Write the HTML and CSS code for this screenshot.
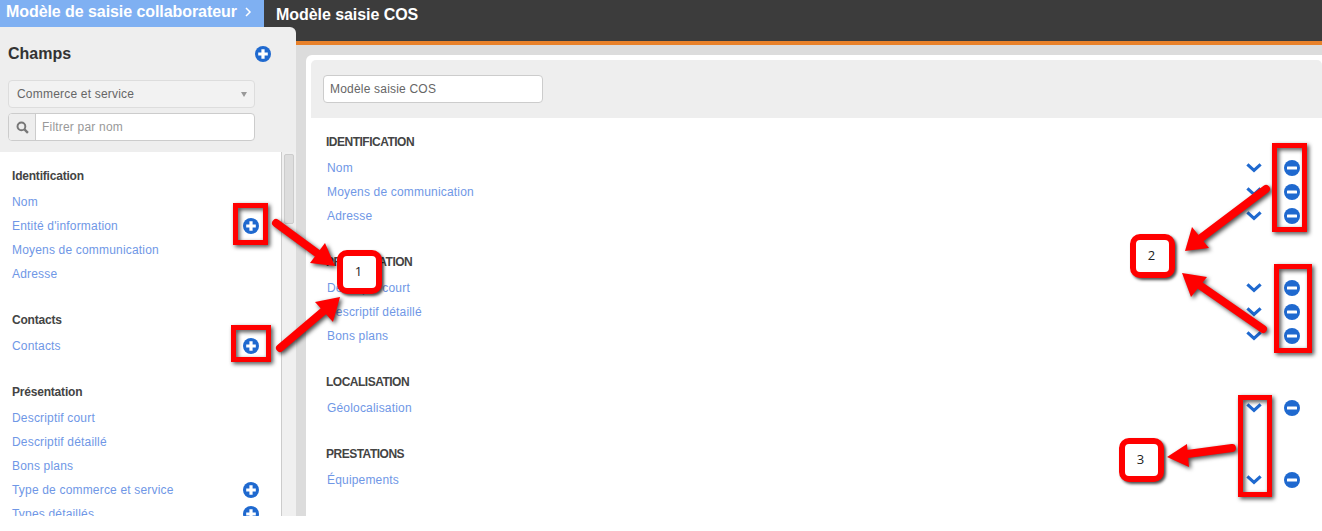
FILE: index.html
```html
<!DOCTYPE html>
<html lang="fr">
<head>
    <meta charset="UTF-8">
    <title>Modèle saisie COS</title>
    <link rel="stylesheet" href="styles.css">
</head>
<body>
    <svg class="icon-defs" width="0" height="0">
        <symbol id="i-plus" viewBox="0 0 16 16">
            <circle cx="8" cy="8" r="8" fill="#1f69cf"/>
            <path d="M6.4 3.2h3.2v3.2h3.2v3.2H9.6v3.2H6.4V9.6H3.2V6.4h3.2z" fill="#fff"/>
        </symbol>
        <symbol id="i-minus" viewBox="0 0 16 16">
            <circle cx="8" cy="8" r="8" fill="#1f69cf"/>
            <rect x="3" y="6.4" width="10" height="3.2" rx="0.6" fill="#fff"/>
        </symbol>
        <symbol id="i-down" viewBox="0 0 16 10">
            <path d="M1.400 1.400 8 7.400l6.600-6" fill="none" stroke="#1f69cf" stroke-width="3.200"/>
        </symbol>
    </svg>

    <div class="page">
        <header class="topbar">
            <div class="crumb">
                <span>Modèle de saisie collaborateur</span>
                <svg class="crumb-arrow" width="7" height="10" viewBox="0 0 7 10"><path d="M1 1l4 4-4 4" fill="none" stroke="#fff" stroke-width="1.500"/></svg>
            </div>
            <div class="topbar-title">Modèle saisie COS</div>
        </header>

        <div class="layout">
            <aside class="sidebar">
                <div class="sidebar-head">
                    <div class="sidebar-title">
                        <h2>Champs</h2>
                        <svg class="icon icon-add"><use href="#i-plus"/></svg>
                    </div>
                    <div class="select-box">Commerce et service <span class="select-caret"></span></div>
                    <div class="filter-box">
                        <span class="filter-addon">
                            <svg width="13" height="13" viewBox="0 0 12 12"><circle cx="5" cy="5" r="3.600" fill="none" stroke="#777" stroke-width="1.800"/><path d="M7.800 7.800 11 11" stroke="#777" stroke-width="2.200"/></svg>
                        </span>
                        <span class="filter-input">Filtrer par nom</span>
                    </div>
                </div>
                <div class="sidebar-body">
                    <div class="field-list">
                        <div class="group">
                            <h3>Identification</h3>
                            <div class="row"><a>Nom</a></div>
                            <div class="row"><a>Entité d'information</a><svg class="icon"><use href="#i-plus"/></svg></div>
                            <div class="row"><a>Moyens de communication</a></div>
                            <div class="row"><a>Adresse</a></div>
                        </div>
                        <div class="group">
                            <h3>Contacts</h3>
                            <div class="row"><a>Contacts</a><svg class="icon"><use href="#i-plus"/></svg></div>
                        </div>
                        <div class="group">
                            <h3>Présentation</h3>
                            <div class="row"><a>Descriptif court</a></div>
                            <div class="row"><a>Descriptif détaillé</a></div>
                            <div class="row"><a>Bons plans</a></div>
                            <div class="row"><a>Type de commerce et service</a><svg class="icon"><use href="#i-plus"/></svg></div>
                            <div class="row"><a>Types détaillés</a><svg class="icon"><use href="#i-plus"/></svg></div>
                        </div>
                    </div>
                    <div class="scrollbar"><div class="scroll-thumb"></div></div>
                </div>
            </aside>

            <main class="main">
                <div class="panel">
                    <div class="panel-head">
                        <div class="name-input">Modèle saisie COS</div>
                    </div>
                    <div class="sections">
                        <section class="group">
                            <h3 class="upper">IDENTIFICATION</h3>
                            <div class="row"><a>Nom</a><svg class="chev"><use href="#i-down"/></svg><svg class="icon"><use href="#i-minus"/></svg></div>
                            <div class="row"><a>Moyens de communication</a><svg class="chev"><use href="#i-down"/></svg><svg class="icon"><use href="#i-minus"/></svg></div>
                            <div class="row"><a>Adresse</a><svg class="chev"><use href="#i-down"/></svg><svg class="icon"><use href="#i-minus"/></svg></div>
                        </section>
                        <section class="group">
                            <h3 class="upper">PRÉSENTATION</h3>
                            <div class="row"><a>Descriptif court</a><svg class="chev"><use href="#i-down"/></svg><svg class="icon"><use href="#i-minus"/></svg></div>
                            <div class="row"><a>Descriptif détaillé</a><svg class="chev"><use href="#i-down"/></svg><svg class="icon"><use href="#i-minus"/></svg></div>
                            <div class="row"><a>Bons plans</a><svg class="chev"><use href="#i-down"/></svg><svg class="icon"><use href="#i-minus"/></svg></div>
                        </section>
                        <section class="group">
                            <h3 class="upper">LOCALISATION</h3>
                            <div class="row"><a>Géolocalisation</a><svg class="chev"><use href="#i-down"/></svg><svg class="icon"><use href="#i-minus"/></svg></div>
                        </section>
                        <section class="group">
                            <h3 class="upper">PRESTATIONS</h3>
                            <div class="row"><a>Équipements</a><svg class="chev"><use href="#i-down"/></svg><svg class="icon"><use href="#i-minus"/></svg></div>
                        </section>
                    </div>
                </div>
            </main>
        </div>

        <!-- Annotations rouges par-dessus la capture -->
        <svg class="marks" width="1322" height="531" viewBox="0 0 1322 531">
            <g fill="none" stroke="#f00" stroke-width="5">
                <rect x="235.500" y="205.500" width="30" height="37"/>
                <rect x="233.500" y="327.500" width="35" height="32"/>
                <rect x="1274.500" y="145.500" width="30" height="84"/>
                <rect x="1276.500" y="266.500" width="33" height="84"/>
                <rect x="1240.500" y="397.500" width="29" height="97"/>
            </g>
            <g fill="none" stroke="#f00" stroke-width="8" stroke-linecap="round">
                <path d="M276 223 321 256"/>
                <path d="M280 348 326 309"/>
                <path d="M1266 189 1197 241"/>
                <path d="M1263 329 1195 282"/>
                <path d="M1232 448 1180 455"/>
            </g>
            <g fill="#f00">
                <path d="M335 266 310 263 325 243z"/>
                <path d="M340 297 333 322 315 302z"/>
                <path d="M1185 251 1192 227 1209 248z"/>
                <path d="M1182 273 1207 277 1191 297z"/>
                <path d="M1167 457 1187 444 1189 467z"/>
            </g>
        </svg>
        <div class="note note-1">1</div>
        <div class="note note-2">2</div>
        <div class="note note-3">3</div>
    </div>
</body>
</html>
```

FILE: styles.css
```css
body {
    margin: 0;
    background-color: #fff;
    font-family: "Liberation Sans", Arial, sans-serif;
    font-size: 12px;
    color: #333;
}

.icon-defs {
    position: absolute;
}

.page {
    position: relative;
    width: 1322px;
    height: 531px;
    overflow: hidden;
}

/* Barre du haut */
.topbar {
    display: flex;
    height: 41px;
    background-color: #3c3c3c;
    border-bottom: 4px solid #e8812a;
    color: #fff;
    font-size: 16px;
    font-weight: bold;
}

.crumb {
    display: flex;
    align-items: center;
    gap: 8px;
    width: 264px;
    height: 27px;
    box-sizing: border-box;
    padding: 0 0 3px 6px;
    line-height: 18px;
    letter-spacing: -0.07px;
    background-color: #7fb0f2;
    white-space: nowrap;
}

.topbar-title {
    padding: 6px 0 0 12px;
    line-height: 18px;
    letter-spacing: -0.06px;
}

.layout {
    display: flex;
    height: 471px;
}

/* Colonne de gauche */
.sidebar {
    width: 296px;
    height: 489px;
    margin-top: -18px;
    flex-shrink: 0;
    display: flex;
    flex-direction: column;
    background-color: #eee;
    border-radius: 0 6px 0 0;
}

.sidebar-head {
    height: 125px;
    box-sizing: border-box;
    padding: 0 41px 0 8px;
}

.sidebar-title {
    display: flex;
    align-items: center;
    justify-content: space-between;
    height: 53px;
}

.sidebar-title h2 {
    margin: 0;
    font-size: 16px;
    color: #333;
}

.icon-add {
    margin-right: -16px;
}

.select-box {
    position: relative;
    height: 26px;
    line-height: 26px;
    padding-left: 8px;
    border: 1px solid #ddd;
    border-radius: 4px;
    background-color: #f2f2f2;
    color: #666;
    letter-spacing: 0.2px;
}

.select-caret {
    position: absolute;
    right: 7px;
    top: 11px;
    border: 3px solid transparent;
    border-top: 5px solid #999;
    border-bottom: 0;
}

.filter-box {
    display: flex;
    height: 26px;
    margin-top: 5px;
    border: 1px solid #ccc;
    border-radius: 4px;
    overflow: hidden;
    background-color: #fff;
}

.filter-addon {
    display: flex;
    align-items: center;
    justify-content: center;
    width: 26px;
    background-color: #eee;
    border-right: 1px solid #ccc;
}

.filter-input {
    padding-left: 6px;
    line-height: 26px;
    color: #999;
    letter-spacing: 0.2px;
}

.sidebar-body {
    flex: 1;
    display: flex;
    min-height: 0;
    background-color: #fff;
}

.field-list {
    flex: 1;
    padding: 12px 22px 0 12px;
    overflow: hidden;
}

.scrollbar {
    width: 14px;
    background-color: #f0f0f0;
    border-left: 1px solid #ccc;
}

.scroll-thumb {
    width: 10px;
    height: 70px;
    margin: 2px 0 0 2px;
    box-sizing: border-box;
    background-color: #ddd;
    border: 1px solid #ccc;
    border-radius: 2px;
}

/* Groupes de champs */
.group {
    margin-bottom: 22px;
}

.group h3 {
    margin: 0 0 2px;
    height: 24px;
    line-height: 24px;
    font-size: 12px;
    letter-spacing: -0.2px;
    color: #444;
}

.group h3.upper {
    margin-left: -1px;
    letter-spacing: -0.5px;
}

.row {
    display: flex;
    align-items: center;
    height: 24px;
    letter-spacing: 0.18px;
}

.row a {
    flex: 1;
    color: #6f97e6;
}

.icon {
    width: 16px;
    height: 16px;
    flex-shrink: 0;
}

.chev {
    width: 16px;
    height: 10px;
    flex-shrink: 0;
    margin-right: 22px;
}

/* Partie centrale */
.main {
    flex: 1;
    padding: 10px 0 0 10px;
    background-color: #dcdcdc;
}

.panel {
    height: 100%;
    box-sizing: border-box;
    padding: 5px 0 0 5px;
    background-color: #fff;
    border-radius: 6px 0 0 0;
}

.panel-head {
    height: 58px;
    box-sizing: border-box;
    padding: 15px 0 0 12px;
    background-color: #eee;
    border-radius: 5px 5px 0 0;
}

.name-input {
    width: 212px;
    height: 26px;
    line-height: 26px;
    padding-left: 6px;
    background-color: #fff;
    border: 1px solid #ccc;
    border-radius: 4px;
    color: #666;
    letter-spacing: 0.2px;
}

.sections {
    padding: 12px 22px 0 16px;
}

/* Repères numérotés */
.marks {
    position: absolute;
    top: 0;
    left: 0;
    filter: drop-shadow(2px 2px 2px rgba(0, 0, 0, 0.7));
}

.note {
    position: absolute;
    width: 33px;
    height: 32px;
    line-height: 30px;
    text-align: center;
    text-indent: -2px;
    font-family: "Open Sans", sans-serif;
    font-size: 13px;
    color: #222;
    background-color: #fff;
    border: 6px solid #f00;
    border-radius: 10px;
    box-shadow: 2px 2px 3px rgba(0, 0, 0, 0.7);
}

.note-1 {
    left: 337px;
    top: 250px;
}

.note-2 {
    left: 1130px;
    top: 234px;
}

.note-3 {
    left: 1119px;
    top: 438px;
}
```
